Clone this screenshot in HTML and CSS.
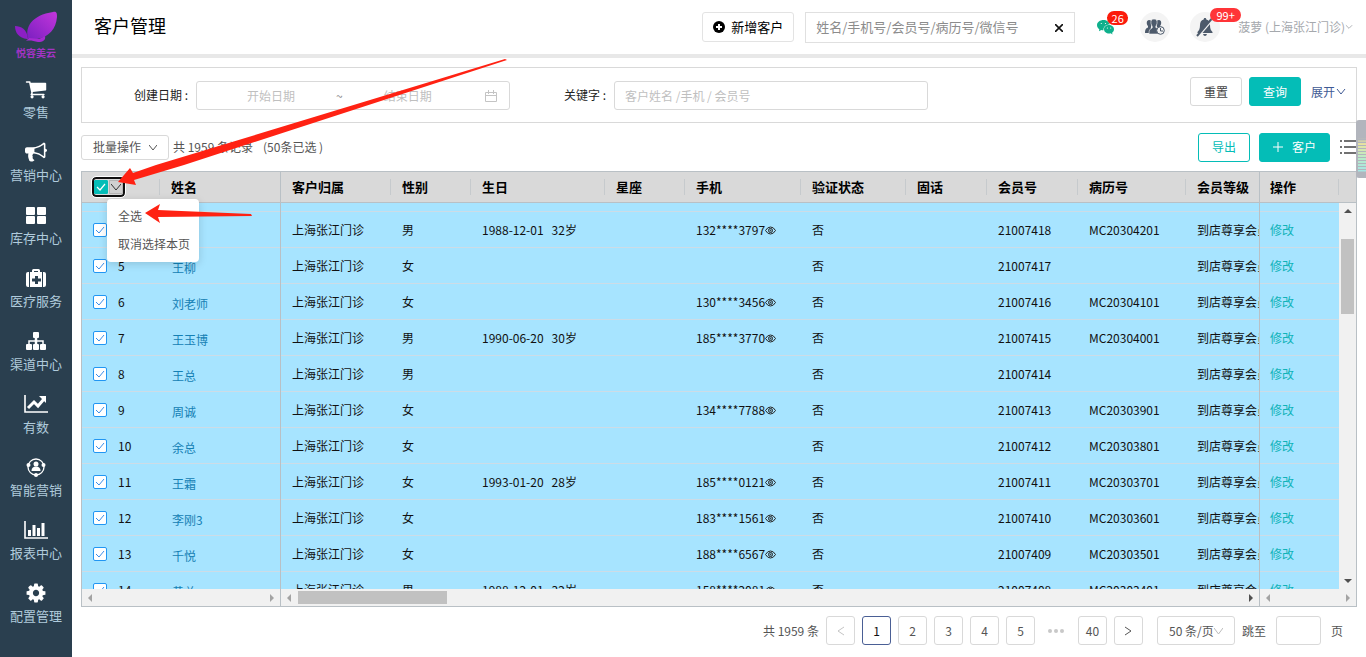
FILE: index.html
```html
<!DOCTYPE html>
<html lang="zh-CN">
<head>
	<meta charset="utf-8">
	<title>客户管理</title>
	<link rel="stylesheet" href="styles.css">
</head>
<body>

	<nav class="sidebar">
		<a class="logo" href="#home">
			<svg width="44" height="34" viewBox="0 0 44 34">
				<defs>
					<linearGradient id="wing" x1="0" y1="1" x2="1" y2="0">
						<stop offset="0" stop-color="#7a1fc0"/>
						<stop offset="1" stop-color="#c436dc"/>
					</linearGradient>
				</defs>
				<path fill="url(#wing)" d="M14 28C11 17 18 5 39 2c4-1 4 2 4 5-1 12-8 20-20 22-4 1-7 1-9-1z"/>
				<path fill="#8c1fc4" d="M13 29C5 28 1 23 1 16c6 0 12 3 13 13z"/>
				<path fill="#a52ad0" d="M12 31l3-3 10 1 6-3c1 4-2 6-7 6-5-1-8-2-12-1z"/>
			</svg>
			<span>悦容美云</span>
		</a>
		<a class="nav-item" href="#retail">
			<svg viewBox="0 0 1792 1792"><path d="M704 1536q0 52-38 90t-90 38-90-38-38-90 38-90 90-38 90 38 38 90zm896 0q0 52-38 90t-90 38-90-38-38-90 38-90 90-38 90 38 38 90zm128-1088v512q0 24-16.500 42.500t-40.500 21.500l-1044 122q13 60 13 70 0 16-24 64h920q26 0 45 19t19 45-19 45-45 19h-1024q-26 0-45-19t-19-45q0-11 8-31.500t16-36 21.500-40 15.500-29.500l-177-823h-204q-26 0-45-19t-19-45 19-45 45-19h256q16 0 28.500 6.500t19.500 15.500 13 24.500 8 26 5.500 29.500 4.500 26h1201q26 0 45 19t19 45z"/></svg>
			<span>零售</span>
		</a>
		<a class="nav-item" href="#marketing">
			<svg viewBox="0 0 1792 1792"><path d="M1664 640q53 0 90.500 37.500t37.500 90.500-37.500 90.500-90.500 37.500v384q0 52-38 90t-90 38q-417-347-812-380-58 19-91 66t-31 100.500 40 92.500q-20 33-23 65.500t6 58 33.500 55 48 50 61.500 50.500q-29 58-111.500 83t-168.500 11.500-132-55.500q-7-23-29.500-87.500t-32-94.500-23-89-15-101 3.500-98.500 22-110.500h-122q-66 0-113-47t-47-113v-192q0-66 47-113t113-47h480q435 0 896-384 52 0 90 38t38 90v384zm-128 604v-954q-394 302-768 343v270q377 42 768 341z"/></svg>
			<span>营销中心</span>
		</a>
		<a class="nav-item" href="#stock">
			<svg viewBox="0 0 22 22"><rect x="1" y="3" width="9" height="8" rx="1"/><rect x="12" y="3" width="9" height="8" rx="1"/><rect x="1" y="12" width="9" height="8" rx="1"/><rect x="12" y="12" width="9" height="8" rx="1"/></svg>
			<span>库存中心</span>
		</a>
		<a class="nav-item" href="#medical">
			<svg viewBox="0 0 22 22"><path fill-rule="evenodd" d="M5 5h2V3.500Q7 2 8.500 2h5Q15 2 15 3.500V5h2v15H5zm4 0h4V4H9zm1 4v2.500H7v3h3V17h3v-2.500h3v-3h-3V9z"/><path d="M4 5v15H3q-2 0-2-2V7q0-2 2-2zM18 5v15h1q2 0 2-2V7q0-2-2-2z"/></svg>
			<span>医疗服务</span>
		</a>
		<a class="nav-item" href="#channel">
			<svg viewBox="0 0 22 22"><rect x="8" y="2" width="6" height="6" rx="1"/><rect x="1" y="14" width="6" height="6" rx="1"/><rect x="8" y="14" width="6" height="6" rx="1"/><rect x="15" y="14" width="6" height="6" rx="1"/><path d="M10.500 8v6M11.500 8v6M4 14v-3h14v3" fill="none" stroke="#fff" stroke-width="1.500"/></svg>
			<span>渠道中心</span>
		</a>
		<a class="nav-item" href="#data">
			<svg class="wide" viewBox="0 0 26 22"><path d="M2 2v17h23" fill="none" stroke="#fff" stroke-width="1.600"/><path d="M5 15l6-6 4 4 6-7" fill="none" stroke="#fff" stroke-width="3"/><path d="M16 3h7v7z"/></svg>
			<span>有数</span>
		</a>
		<a class="nav-item" href="#smart">
			<svg viewBox="0 0 22 22"><circle cx="11" cy="11" r="8" fill="none" stroke="#fff" stroke-width="1.300"/><circle cx="11" cy="8" r="2.500"/><path d="M6.500 15q0-4.500 4.500-4.500t4.500 4.500z"/><circle cx="3.500" cy="9" r="2"/><circle cx="18.500" cy="9" r="2"/><circle cx="11" cy="19" r="2"/></svg>
			<span>智能营销</span>
		</a>
		<a class="nav-item" href="#report">
			<svg class="wide" viewBox="0 0 26 22"><path d="M2 2v17h23" fill="none" stroke="#fff" stroke-width="1.600"/><path d="M5 11h3v6H5zM9.500 6h3v11h-3zM14 9h3v8h-3zM18.500 4h3v13h-3z"/></svg>
			<span>报表中心</span>
		</a>
		<a class="nav-item" href="#config">
			<svg viewBox="0 0 1792 1792"><path d="M1152 896q0-106-75-181t-181-75-181 75-75 181 75 181 181 75 181-75 75-181zm512-109v222q0 12-8 23t-20 13l-185 28q-19 54-39 91 35 50 107 138 10 12 10 25t-9 23q-27 37-99 108t-94 71q-12 0-26-9l-138-108q-44 23-91 38-16 136-29 186-7 28-36 28h-222q-14 0-24.500-8.500t-11.500-21.500l-28-184q-49-16-90-37l-141 107q-10 9-25 9-14 0-25-11-126-114-165-168-7-10-7-23 0-12 8-23 15-21 51-66.500t54-70.500q-27-50-41-99l-183-27q-13-2-21-12.500t-8-23.500v-222q0-12 8-23t19-13l186-28q14-46 39-92-40-57-107-138-10-12-10-24 0-10 9-23 26-36 98.500-107.500t94.500-71.500q13 0 26 10l138 107q44-23 91-38 16-136 29-186 7-28 36-28h222q14 0 24.500 8.500t11.500 21.500l28 184q49 16 90 37l142-107q9-9 24-9 13 0 25 10 129 119 165 170 7 8 7 22 0 12-8 23-15 21-51 66.500t-54 70.500q26 50 41 98l183 28q13 2 21 12.500t8 23.500z"/></svg>
			<span>配置管理</span>
		</a>
	</nav>

	<div class="page">
		<header class="topbar">
			<h1>客户管理</h1>
			<button class="btn btn-new" type="button">
				<svg width="12" height="12" viewBox="0 0 12 12"><circle cx="6" cy="6" r="6"/><path d="M6 3v6M3 6h6" stroke="#fff" stroke-width="2"/></svg>
				新增客户
			</button>
			<div class="search">
				<input type="text" aria-label="搜索客户" placeholder="姓名/手机号/会员号/病历号/微信号">
				<button type="button" aria-label="清空">
					<svg width="8" height="8" viewBox="0 0 8 8"><path d="M0 0l8 8M8 0L0 8" stroke="#111" stroke-width="1.600"/></svg>
				</button>
			</div>
			<a class="wechat" href="#wechat" aria-label="微信消息">
				<svg width="17" height="15" viewBox="0 0 17 15">
					<path fill="#0fb08c" d="M6.500 0C3 0 0 2.200 0 5.200c0 1.700 1 3 2.300 4L2 11.200l2.200-1.200c.8.200 1.500.3 2.300.3C6 6.800 9 4.500 12.800 4.500 12.300 1.900 9.600 0 6.500 0z"/>
					<path fill="#0fb08c" d="M17 9.200C17 6.800 14.700 5 12 5S7 6.800 7 9.200s2.300 4.300 5 4.300c.6 0 1.200-.1 1.700-.2l1.800 1.100-.4-1.700c1.200-.9 1.900-2.100 1.900-3.500z"/>
					<g fill="#fff"><circle cx="4.300" cy="3.500" r=".6"/><circle cx="8.500" cy="3.500" r=".6"/><circle cx="10.400" cy="8" r=".6"/><circle cx="13.700" cy="8" r=".6"/></g>
				</svg>
				<span class="badge badge-red">26</span>
			</a>
			<a class="round" href="#queue" aria-label="等候客户">
				<svg width="20" height="16" viewBox="0 0 20 16" fill="#4d5a6b">
					<path d="M4 1c2 0 3 1 2.500 4L6 8l-1 6H0c0-3 .5-4.500 3-5.500V7C1 5 1.500 1 4 1zM14 1c-2 0-3 1-2.500 4l.5 3 2 1 4-1-3-.5V7c2-2 1.500-6-1-6z"/>
					<path d="M9 0c2.500 0 3.500 2 3 4.500-.2 1.300-.7 2-1.200 2.700v1.300l2.200 1V15H4c0-3.500.5-5 3.200-6V7.200C6.700 6.500 6.200 5.800 6 4.500 5.500 2 6.500 0 9 0z" stroke="#f4f4f4" stroke-width=".6"/>
					<circle cx="15.500" cy="11.500" r="3.800" fill="#f4f4f4" stroke="#4d5a6b" stroke-width="1"/>
					<path d="M15.500 9v3h2.500" fill="none" stroke="#4d5a6b"/>
				</svg>
			</a>
			<a class="round" href="#notice" aria-label="通知">
				<svg width="18" height="20" viewBox="0 0 18 20">
					<path fill="#4d5a6b" d="M9 1c1 0 1.300.7 1.300 1.500C13 3.300 14 5.500 14 8c0 4 1 5.500 2.500 7v1h-15v-1C3 13.500 4 12 4 8c0-2.500 1-4.700 3.700-5.500C7.700 1.700 8 1 9 1zM7 17h4q-.5 2-2 2t-2-2z"/>
					<path d="M2.500 19L17 2" stroke="#f4f4f4" stroke-width="2"/>
					<path d="M1 19L15.500 2" stroke="#4d5a6b" stroke-width="2"/>
				</svg>
				<span class="badge badge-pink">99+</span>
			</a>
			<a class="user" href="#user">菠萝 (上海张江门诊)
				<svg width="8" height="6" viewBox="0 0 9 6"><path d="M1 1l3.500 3.500L8 1"/></svg>
			</a>
		</header>

		<main class="main">
			<form class="filter">
				<div class="field">
					<label for="start">创建日期 :</label>
					<div class="range">
						<input id="start" type="text" placeholder="开始日期">
						<span>~</span>
						<input type="text" aria-label="结束日期" placeholder="结束日期">
						<svg width="12" height="12" viewBox="0 0 12 12"><path d="M.5 2.500h11v9H.5zM.5 5.500h11M3.500 0v4M8.500 0v4"/></svg>
					</div>
				</div>
				<div class="field">
					<label class="short" for="keyword">关键字 :</label>
					<input id="keyword" class="text" type="text" placeholder="客户姓名 /手机 / 会员号">
				</div>
				<div class="filter-actions">
					<button class="btn" type="reset">重置</button>
					<button class="btn btn-primary" type="button">查询</button>
					<a class="expand" href="#more">展开<svg width="10" height="8" viewBox="0 0 10 8"><path d="M1 1l4 5 4-5"/></svg></a>
				</div>
			</form>

			<div class="toolbar">
				<button class="btn btn-batch" type="button">批量操作
					<svg width="8" height="7" viewBox="0 0 8 7"><path d="M0 1l4 5 4-5"/></svg>
				</button>
				<span class="count">共 1959 条记录</span>
				<span class="picked">(50条已选 )</span>
				<button class="btn btn-outline" type="button">导出</button>
				<button class="btn btn-primary btn-add" type="button">
					<svg width="10" height="10" viewBox="0 0 10 10"><path d="M5 0v10M0 5h10"/></svg>
					客户
				</button>
				<button class="btn-list" type="button" aria-label="列设置">
					<svg width="17" height="14" viewBox="0 0 17 14"><path d="M0 1h2M4 1h13M0 7h2M4 7h13M0 13h2M4 13h13" stroke="#444" stroke-width="1.400"/></svg>
				</button>
			</div>

			<div class="grid">
				<section class="pane pane-left">
					<div class="view">
						<table>
							<colgroup><col class="w-36"><col class="w-42"><col></colgroup>
							<thead>
								<tr>
									<th colspan="2">
										<div class="select-all">
											<input type="checkbox" aria-label="全选" checked>
											<button type="button" aria-label="选择菜单"><svg width="10" height="8" viewBox="0 0 10 8"><path d="M0 1l5 6 5-6"/></svg></button>
										</div>
									</th>
									<th>姓名</th>
								</tr>
							</thead>
							<tbody id="rows-left"><tr class="cut"><td></td><td></td><td></td></tr></tbody>
						</table>
					</div>
					<div class="hbar"><i class="tri left"></i><i class="tri right"></i></div>
				</section>

				<section class="pane pane-mid">
					<div class="view">
						<table>
							<colgroup>
								<col class="w-110"><col class="w-80"><col class="w-134"><col class="w-80"><col class="w-116">
								<col class="w-105"><col class="w-81"><col class="w-91"><col class="w-108"><col>
							</colgroup>
							<thead>
								<tr><th>客户归属</th><th>性别</th><th>生日</th><th>星座</th><th>手机</th><th>验证状态</th><th>固话</th><th>会员号</th><th>病历号</th><th>会员等级</th></tr>
							</thead>
							<tbody id="rows-mid"><tr class="cut"><td colspan="10"></td></tr></tbody>
						</table>
					</div>
					<div class="hbar"><i class="tri left"></i><i class="thumb"></i><i class="tri right dark"></i></div>
				</section>

				<section class="pane pane-right">
					<div class="view">
						<table>
							<thead><tr><th>操作</th></tr></thead>
							<tbody id="rows-right"><tr class="cut"><td></td></tr></tbody>
						</table>
						<div class="vside">
							<div class="vhead"></div>
							<div class="vbar"><i class="tri up"></i><i class="thumb"></i><i class="tri down"></i></div>
						</div>
					</div>
					<div class="hbar"><i class="tri left"></i><i class="tri right"></i></div>
				</section>

				<div class="menu">
					<button type="button">全选</button>
					<button type="button">取消选择本页</button>
				</div>
			</div>

			<div class="pager">
				<span>共 1959 条</span>
				<button type="button" class="off" aria-label="上一页"><svg width="7" height="10" viewBox="0 0 7 10"><path d="M7 1L1 5l6 4"/></svg></button>
				<button type="button" class="on">1</button>
				<button type="button">2</button>
				<button type="button">3</button>
				<button type="button">4</button>
				<button type="button">5</button>
				<svg class="dots" width="29" height="4" viewBox="0 0 29 4"><circle cx="8" cy="2" r="2"/><circle cx="14" cy="2" r="2"/><circle cx="20" cy="2" r="2"/></svg>
				<button type="button">40</button>
				<button type="button" aria-label="下一页"><svg width="7" height="10" viewBox="0 0 7 10"><path d="M0 1l6 4-6 4"/></svg></button>
				<div class="size">
					<select aria-label="每页条数"><option>50 条/页</option></select>
					<svg width="9" height="8" viewBox="0 0 9 8"><path d="M0 1l4.500 6L9 1"/></svg>
				</div>
				<label for="jump">跳至</label>
				<input id="jump" type="text">
				<span class="unit">页</span>
			</div>
		</main>
	</div>

	<div class="side-tab"></div>

	<svg class="arrows" width="520" height="240" viewBox="0 0 520 240">
		<path d="M118 182l12-14 3 5 23-8L505 59l2 1-323 105-50 15 2 5zM145 213l15-9-2 6 93 4 1 2-94 1 2 6z"/>
	</svg>

	<template id="tpl-left">
		<tr><td><input class="check" type="checkbox" checked></td><td class="no"></td><td class="name"><a href="#customer"></a></td></tr>
	</template>
	<template id="tpl-mid">
		<tr><td>上海张江门诊</td><td class="sex"></td><td class="birth"></td><td></td><td class="phone"></td><td>否</td><td></td><td class="card"></td><td class="record"></td><td>到店尊享会员</td></tr>
	</template>
	<template id="tpl-right">
		<tr><td><a href="#edit">修改</a></td></tr>
	</template>
	<template id="tpl-eye"><svg class="eye" width="11" height="9" viewBox="0 0 11 9"><path d="M.5 4.500Q2.500 1 5.500 1t5 3.500Q8.500 8 5.500 8t-5-3.500z"/><circle cx="5.500" cy="4.500" r="2"/><circle cx="5.500" cy="4.500" r=".5"/></svg></template>

	<script type="text/javascript">

		// no, name, sex, birthday, age, phone, card, record
		var data=[
			["","","男","1988-12-01","32岁","132****3797","21007418","MC20304201"],
			["5","王柳","女","","","","21007417",""],
			["6","刘老师","女","","","130****3456","21007416","MC20304101"],
			["7","王玉博","男","1990-06-20","30岁","185****3770","21007415","MC20304001"],
			["8","王总","男","","","","21007414",""],
			["9","周诚","女","","","134****7788","21007413","MC20303901"],
			["10","余总","女","","","","21007412","MC20303801"],
			["11","王霜","女","1993-01-20","28岁","185****0121","21007411","MC20303701"],
			["12","李刚3","女","","","183****1561","21007410","MC20303601"],
			["13","千悦","女","","","188****6567","21007409","MC20303501"],
			["14","黄总","男","1988-12-01","32岁","158****2081","21007408","MC20303401"]
		];

		function cloneOf(id){
			return document.importNode(document.getElementById(id).content,true);
		}

		data.forEach(el =>{
			let left=cloneOf("tpl-left"), mid=cloneOf("tpl-mid");

			left.querySelector("input").setAttribute("aria-label","选择客户 "+el[6]);
			left.querySelector(".no").textContent=el[0];
			left.querySelector("a").textContent=el[1];

			mid.querySelector(".sex").textContent=el[2];
			if(el[3]){
				let age=document.createElement("span");
				age.textContent=el[4];
				mid.querySelector(".birth").append(el[3],age);
			}
			if(el[5]){
				mid.querySelector(".phone").append(el[5],cloneOf("tpl-eye"));
			}
			mid.querySelector(".card").textContent=el[6];
			mid.querySelector(".record").textContent=el[7];

			document.getElementById("rows-left").appendChild(left);
			document.getElementById("rows-mid").appendChild(mid);
			document.getElementById("rows-right").appendChild(cloneOf("tpl-right"));
		});

	</script>

</body>
</html>
```
FILE: styles.css
```css
*{
	box-sizing: border-box;
}
body{
	margin: 0;
	height: 100vh;
	display: flex;
	overflow: hidden;
	background: #fff;
	color: #222;
	font-family: "Noto Sans CJK SC", "Liberation Sans", sans-serif;
	font-size: 12px;
	line-height: 18px;
}
button, input, select{
	font: inherit;
	color: inherit;
	margin: 0;
}
input::placeholder{
	color: #bfbfbf;
	opacity: 1;
}
input{
	outline: none;
}
a{
	text-decoration: none;
}
svg{
	flex: none;
}

/* sidebar */
.sidebar{
	width: 72px;
	flex: none;
	background: #2a3f4f;
}
.logo{
	display: flex;
	flex-direction: column;
	align-items: center;
	height: 68px;
	padding-top: 10px;
	color: #a233c4;
	font-size: 10px;
	font-weight: 700;
	line-height: 17px;
}
.nav-item{
	display: flex;
	flex-direction: column;
	align-items: center;
	height: 63px;
	padding-top: 10px;
	color: #b0cbdc;
	font-size: 13px;
	line-height: 20px;
}
.nav-item svg{
	width: 22px;
	height: 22px;
	margin-bottom: 2px;
	fill: #fff;
}
.nav-item svg.wide{
	width: 26px;
}

/* top bar */
.page{
	flex: 1;
	min-width: 0;
	display: flex;
	flex-direction: column;
}
.topbar{
	display: flex;
	align-items: center;
	flex: none;
	height: 58px;
	padding: 0 13px 0 22px;
	border-bottom: 4px solid #e8e8e8;
}
.topbar h1{
	margin: 0 auto 0 0;
	padding-bottom: 4px;
	color: #000;
	font-size: 18px;
	font-weight: 400;
	line-height: 28px;
}
.btn{
	display: flex;
	align-items: center;
	justify-content: center;
	height: 29px;
	padding: 0 13px;
	border: 1px solid #d9d9d9;
	border-radius: 3px;
	background: #fff;
	color: #444;
	white-space: nowrap;
}
.btn-new{
	height: 30px;
	padding: 0 10px;
	gap: 6px;
	margin-right: 11px;
	border-color: #e3e3e3;
	color: #000;
	font-size: 13px;
}
.search{
	display: flex;
	width: 270px;
	height: 31px;
	margin-right: 22px;
	border: 1px solid #e0e0e0;
}
.search input{
	flex: 1;
	min-width: 0;
	padding: 0 10px;
	border: 0;
	font-size: 13px;
}
.search input::placeholder{
	color: #8c8c8c;
}
.search button{
	width: 30px;
	padding: 0;
	border: 0;
	background: none;
}
.wechat, .round{
	position: relative;
	display: flex;
	align-items: center;
	justify-content: center;
}
.wechat{
	margin-right: 26px;
}
.round{
	width: 30px;
	height: 30px;
	margin-right: 20px;
	border-radius: 50%;
	background: #f4f4f4;
}
.round + .user{
	margin-left: -2px;
}
.badge{
	position: absolute;
	height: 14px;
	border-radius: 7px;
	color: #fff;
	font-size: 11px;
	line-height: 14px;
	text-align: center;
}
.badge-red{
	left: 10px;
	top: -9px;
	width: 21px;
	background: #fb1b0b;
}
.badge-pink{
	left: 20px;
	top: -4px;
	width: 31px;
	background: #ff3438;
}
.user{
	display: flex;
	align-items: center;
	color: #a5a8ad;
}
.user svg, .expand svg, .btn-batch svg, .select-all svg, .range svg, .pager button svg, .size svg, .btn-add svg{
	fill: none;
	stroke: currentColor;
}

/* filter */
.main{
	flex: 1;
	min-height: 0;
	display: flex;
	flex-direction: column;
	padding: 9px 9px 12px;
}
.filter{
	display: flex;
	align-items: flex-start;
	flex: none;
	gap: 54px;
	height: 56px;
	padding: 9px 10px 0 52px;
	border: 1px solid #d9d9d9;
}
.field{
	display: flex;
	align-items: center;
	padding-top: 4px;
}
.field label{
	width: 62px;
	padding-bottom: 2px;
}
.field label.short{
	width: 50px;
}
.range, .text{
	display: flex;
	align-items: center;
	width: 314px;
	height: 29px;
	border: 1px solid #d9d9d9;
	border-radius: 3px;
	color: #888;
}
.range{
	padding: 0 12px 0 9px;
}
.range input{
	width: 130px;
	padding: 0;
	border: 0;
	text-align: center;
}
.range svg{
	margin-left: auto;
	color: #c4c4c4;
}
.text{
	padding: 0 10px;
}
.filter-actions{
	display: flex;
	align-items: center;
	gap: 7px;
	margin-left: auto;
}
.btn-primary{
	border-color: #04bdb7;
	background: #04bdb7;
	color: #fff;
}
.expand{
	display: flex;
	align-items: center;
	gap: 1px;
	margin-left: 3px;
	color: #3f5a94;
}

/* toolbar */
.toolbar{
	display: flex;
	align-items: center;
	flex: none;
	height: 48px;
	color: #555;
}
.btn-batch{
	height: 25px;
	padding: 0 11px;
	gap: 8px;
	color: #555;
}
.count{
	margin: 0 10px 0 4px;
}
.btn-outline{
	margin: 0 9px 0 auto;
	border-color: #04bdb7;
	color: #04bdb7;
}
.btn-add{
	gap: 9px;
	margin-right: 10px;
}
.btn-list{
	display: flex;
	padding: 0;
	border: 0;
	background: none;
}

/* customer grid */
.grid{
	position: relative;
	display: flex;
	flex: 1;
	min-height: 0;
	border: 1px solid #b9c0c5;
}
.pane{
	display: flex;
	flex-direction: column;
	min-width: 0;
}
.pane-left{
	width: 199px;
	flex: none;
	border-right: 1px solid #b9c0c5;
}
.pane-mid{
	flex: 1;
}
.pane-right{
	width: 97px;
	flex: none;
	border-left: 1px solid #b9c0c5;
}
.view{
	display: flex;
	align-items: flex-start;
	flex: 1;
	min-height: 0;
	overflow: hidden;
}
table{
	width: 100%;
	border-spacing: 0;
	table-layout: fixed;
	color: #111;
}
.pane-mid table{
	width: 1005px;
	min-width: 100%;
	flex: none;
}
.w-36{ width: 36px; }
.w-42{ width: 42px; }
.w-80{ width: 80px; }
.w-81{ width: 81px; }
.w-91{ width: 91px; }
.w-105{ width: 105px; }
.w-108{ width: 108px; }
.w-110{ width: 110px; }
.w-116{ width: 116px; }
.w-134{ width: 134px; }
th{
	height: 31px;
	padding: 0 11px;
	border-bottom: 1px solid #b9c0c5;
	background: linear-gradient(#c6cacd, #c6cacd) no-repeat right center / 1px 16px #d9d9d9;
	color: #000;
	font-size: 13px;
	font-weight: 700;
	text-align: left;
}
.pane-left th:first-child{
	padding-left: 10px;
}
.pane-left th:last-child{
	background: #d9d9d9;
}
td{
	height: 36px;
	padding: 0 11px;
	border-bottom: 1px solid #cddce6;
	background: #a7e4ff;
	white-space: nowrap;
}
.pane-left td:first-child{
	padding-right: 0;
}
.pane-left td.no{
	padding: 0;
}
.pane-left td.name{
	padding: 4px 0 0 12px;
}
.cut td{
	height: 9px;
}
.name a{
	color: #1580b4;
}
.pane-right th, .pane-right td{
	padding: 0 10px;
}
.pane-right td a{
	color: #0fb3b8;
}
.birth span{
	margin-left: 8px;
}
.eye{
	fill: none;
	stroke: #222;
}
.check, .select-all input{
	appearance: none;
	display: block;
	width: 14px;
	height: 14px;
	border: 1px solid #2196f3;
	border-radius: 2px;
	background: #fff url("data:image/svg+xml,%3Csvg xmlns='http://www.w3.org/2000/svg' viewBox='0 0 12 12'%3E%3Cpath d='M2 6l3 3 5-6' fill='none' stroke='%233b8ee8'/%3E%3C/svg%3E") center / 12px 12px;
}
.select-all{
	display: flex;
	align-items: center;
	gap: 1px;
	width: 33px;
	height: 20px;
	border: 2px solid #101010;
	border-radius: 4px;
	background: #d9d9d9;
	outline: 1px solid #fff;
}
.select-all input{
	border-color: #04bdb7;
	border-radius: 1px;
	background: #04bdb7 url("data:image/svg+xml,%3Csvg xmlns='http://www.w3.org/2000/svg' viewBox='0 0 12 12'%3E%3Cpath d='M2 6l3 3 5-6' fill='none' stroke='white' stroke-width='1.2'/%3E%3C/svg%3E") center / 12px 12px;
}
.select-all button{
	display: flex;
	align-items: center;
	justify-content: center;
	width: 14px;
	height: 14px;
	padding: 0;
	border: 1px solid #b5b5b5;
	background: #d0d0d0;
	color: #333;
}
.menu{
	position: absolute;
	left: 25px;
	top: 27px;
	display: flex;
	flex-direction: column;
	width: 92px;
	padding: 3px 0 4px;
	border-radius: 4px;
	background: #fff;
	box-shadow: 0 2px 8px rgba(0, 0, 0, .15);
}
.menu button{
	height: 28px;
	padding: 0 0 0 11px;
	border: 0;
	background: none;
	color: #555;
	text-align: left;
}

/* scroll bars */
.hbar{
	display: flex;
	align-items: center;
	flex: none;
	height: 17px;
	padding: 0 6px;
	background: #f1f1f1;
}
.tri{
	border: 4px solid transparent;
}
.tri.left{
	border-left: 0;
	border-right-color: #a3a3a3;
}
.tri.right{
	margin-left: auto;
	border-right: 0;
	border-left-color: #a3a3a3;
}
.tri.dark{
	border-left-color: #505050;
}
.hbar .thumb{
	width: 149px;
	height: 13px;
	margin-left: 7px;
	background: #c1c1c1;
}
.vside{
	display: flex;
	flex-direction: column;
	align-self: stretch;
	width: 17px;
	flex: none;
}
.vhead{
	height: 31px;
	border-bottom: 1px solid #b9c0c5;
	background: #d9d9d9;
}
.vbar{
	display: flex;
	flex-direction: column;
	align-items: center;
	flex: 1;
	padding: 6px 0;
	background: #f1f1f1;
}
.vbar .thumb{
	width: 13px;
	height: 75px;
	margin-top: 26px;
	background: #c1c1c1;
}
.tri.up{
	border-top: 0;
	border-bottom-color: #505050;
}
.tri.down{
	margin-top: auto;
	border-bottom: 0;
	border-top-color: #505050;
}

/* pager */
.pager{
	display: flex;
	align-items: center;
	justify-content: flex-end;
	flex: none;
	gap: 7px;
	padding: 9px 14px 0 0;
	color: #555;
}
.pager button, .pager input, .size{
	display: flex;
	align-items: center;
	justify-content: center;
	width: 29px;
	height: 29px;
	padding: 0;
	border: 1px solid #d9d9d9;
	border-radius: 3px;
	background: #fff;
}
.pager .off{
	color: #c4c4c4;
}
.pager .on{
	border-color: #4a5f95;
	color: #111;
}
.pager .dots{
	fill: #c8c8c8;
}
.pager .size{
	position: relative;
	width: 78px;
	margin-left: 7px;
}
.size select{
	appearance: none;
	width: 100%;
	height: 100%;
	padding: 0 0 0 11px;
	border: 0;
	background: none;
}
.size svg{
	position: absolute;
	right: 11px;
	top: 10px;
	color: #bbb;
}
.pager input{
	width: 45px;
	margin: 0 3px;
}

/* floating parts */
.side-tab{
	position: absolute;
	right: 0;
	top: 120px;
	width: 10px;
	height: 58px;
	border: 2px solid #b2b5bd;
	border-right: 0;
	border-radius: 3px 0 0 3px;
	background:
		repeating-linear-gradient(transparent 0 2px, #b2b5bd 2px 3px),
		linear-gradient(#b2b5bd 0 16px, #e9e3a0 22px, #b9ecc9 36px, #a6e6e4 49px, #b2b5bd 50px);
}
.arrows{
	position: absolute;
	left: 0;
	top: 0;
	fill: #ff2213;
	pointer-events: none;
}
```
